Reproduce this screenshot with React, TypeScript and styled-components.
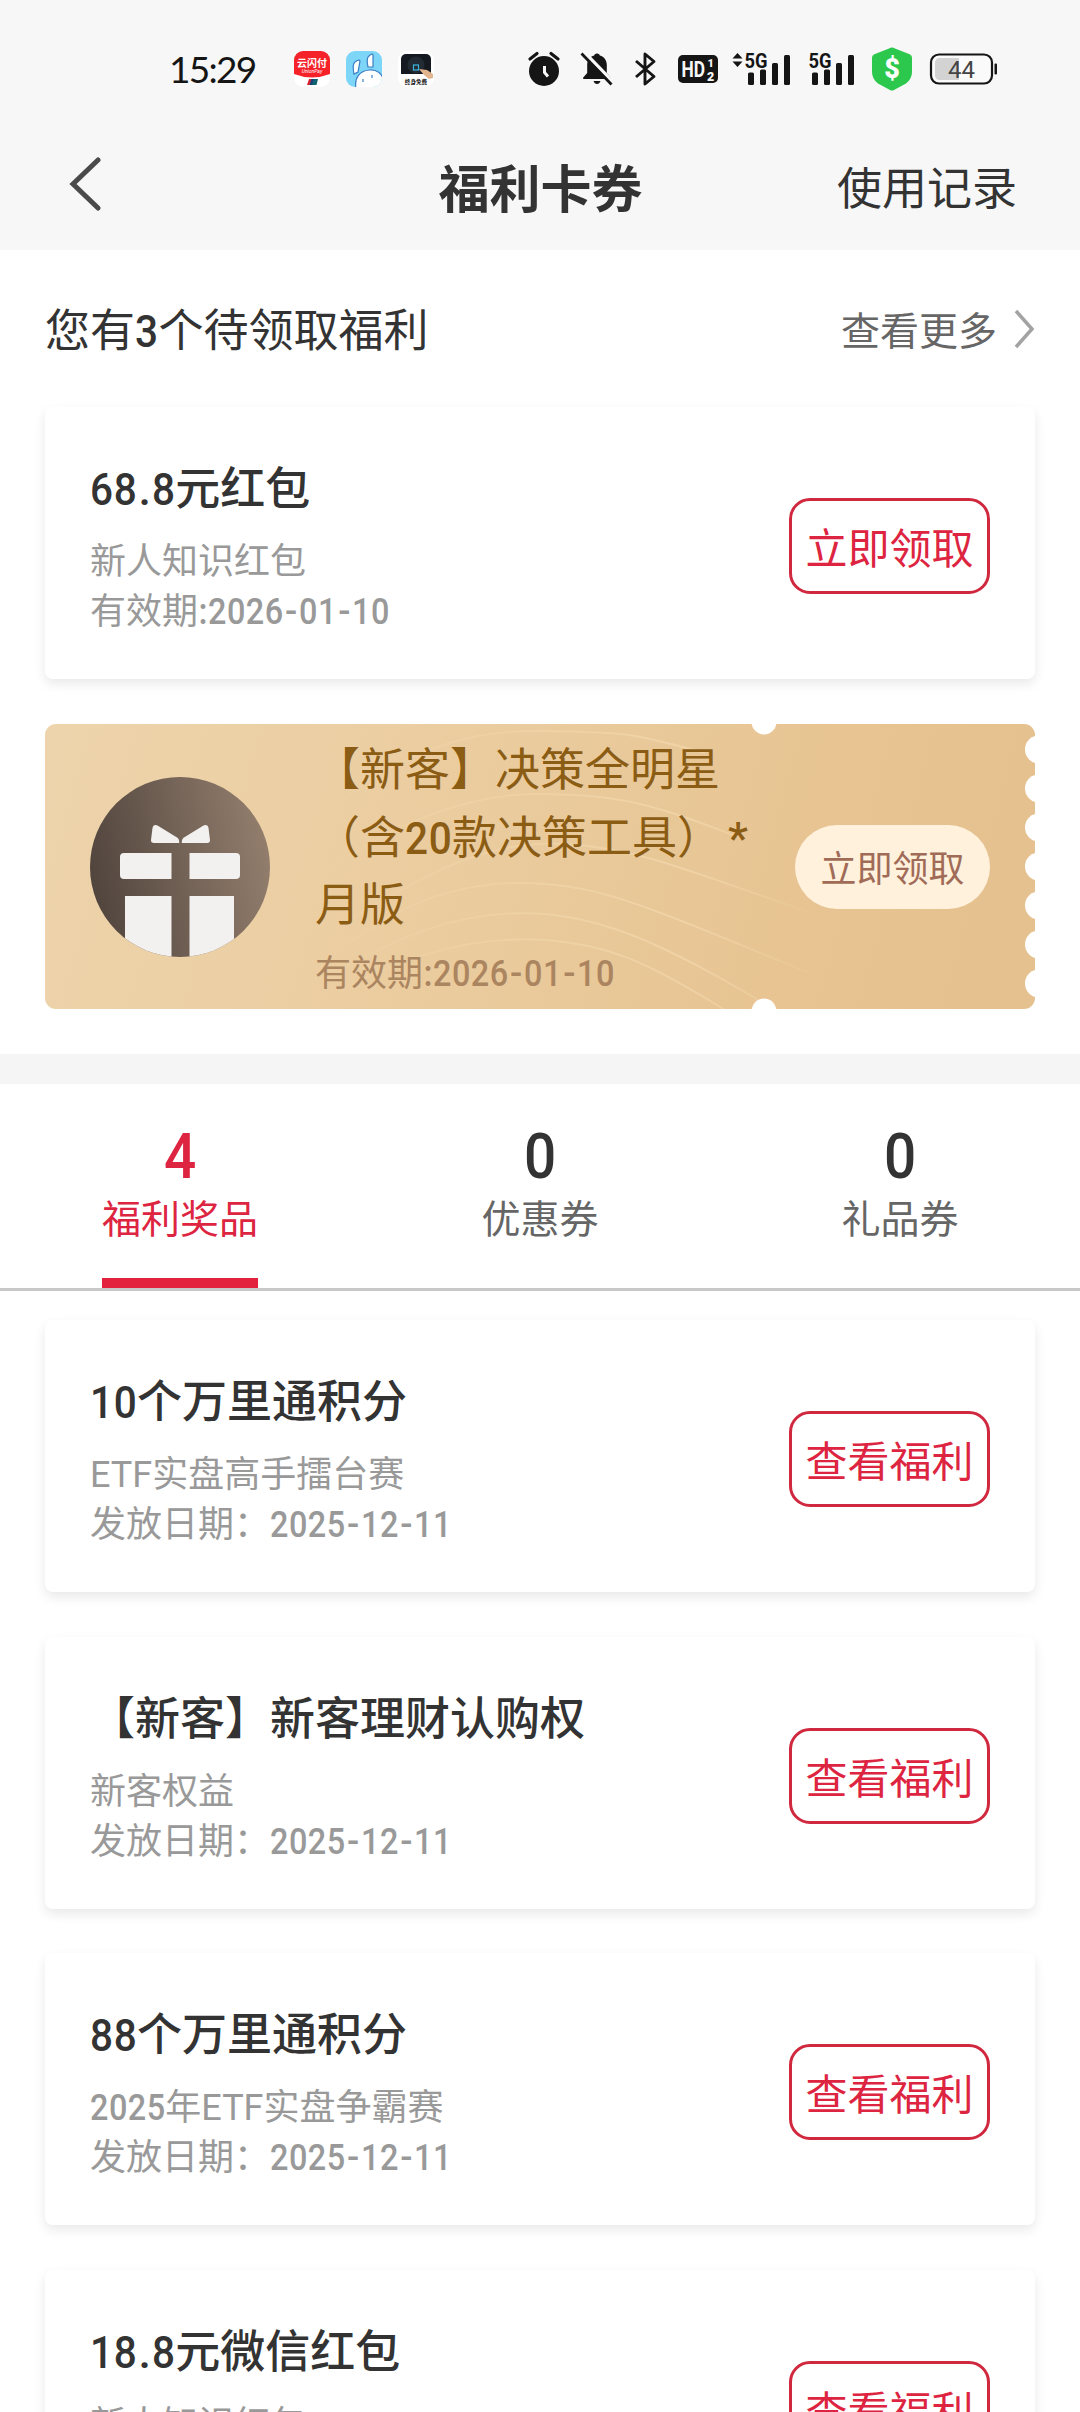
import React from "react";
import styled, { createGlobalStyle } from "styled-components";

const CJK = '"Noto Sans CJK SC", "Noto Sans", sans-serif';

const GlobalStyle = createGlobalStyle`
  * { box-sizing: border-box; }
  html, body { margin: 0; padding: 0; background: #fff; }
  body { font-family: ${CJK}; color: #333; }
`;

const Page = styled.div`
  width: 1080px;
  height: 2412px;
  overflow: hidden;
  background: #fff;
  display: flex;
  flex-direction: column;
  > * { flex-shrink: 0; }
`;

/* ---------- status bar ---------- */

const StatusBar = styled.div`
  height: 126px;
  padding: 12px 82px 0 169px;
  background: #f7f7f7;
  display: flex;
  align-items: center;
  justify-content: space-between;
`;

const StatusGroup = styled.div`
  display: flex;
  align-items: center;
`;

const Clock = styled.span`
  width: 125px;
  font-family: Lato, Roboto, sans-serif;
  font-size: 37px;
  line-height: 40px;
  letter-spacing: -1.7px;
  color: #151515;
`;

const StatusIcon = styled.svg<{ $gap: number }>`
  display: block;
  overflow: visible;
  margin-left: ${(p) => p.$gap}px;
`;

/* ---------- header ---------- */

const Header = styled.header`
  height: 124px;
  padding: 0 63px 4px 66px;
  background: #f7f7f7;
  display: grid;
  grid-template-columns: 1fr auto 1fr;
  align-items: center;
`;

const BackIcon = styled.svg`
  display: block;
  margin: 0 0 4px 2px;
`;

const Title = styled.h1`
  margin: 0 2px 0 0;
  font-size: 51px;
  line-height: 70px;
  font-weight: 700;
  color: #333;
`;

const HeaderLink = styled.span`
  justify-self: end;
  font-size: 45px;
  line-height: 64px;
`;

/* ---------- claimable section ---------- */

const Claimable = styled.section`
  height: 804px;
  padding: 0 45px;
`;

const SectionHead = styled.div`
  height: 157px;
  display: flex;
  align-items: center;
  justify-content: space-between;
`;

const SectionTitle = styled.span`
  margin-bottom: 2px;
  font-size: 45px;
  line-height: 64px;
`;

const More = styled.span`
  display: flex;
  align-items: center;
  gap: 17px;
  font-size: 39px;
  line-height: 56px;
  color: #666;
`;

const MoreLabel = styled.span`
  margin-bottom: 2px;
`;

const Card = styled.article`
  height: 272px;
  padding: 0 45px;
  border-radius: 8px;
  background: #fff;
  box-shadow: 0 5px 12px rgba(0, 0, 0, 0.09);
  display: flex;
  align-items: center;
  justify-content: space-between;
`;

const CardBody = styled.div`
  align-self: flex-start;
  padding-top: 47px;
  display: flex;
  flex-direction: column;
`;

const CardTitle = styled.h2`
  margin: 0 0 15px;
  font-size: 45px;
  line-height: 64px;
  font-weight: 500;
  white-space: nowrap;
`;

const CardLine = styled.p<{ $color?: string }>`
  margin: 0;
  font-size: 36px;
  line-height: 50px;
  color: ${(p) => p.$color ?? "#999"};
  white-space: nowrap;
`;

const OutlineButton = styled.button`
  width: 201px;
  height: 96px;
  padding: 0;
  margin-top: 6px;
  border: 3px solid #d0283f;
  border-radius: 21px;
  background: #fff;
  color: #dd2440;
  font-family: ${CJK};
  font-size: 42px;
  line-height: 60px;
  white-space: nowrap;
`;

const Ticket = styled.article`
  position: relative;
  height: 285px;
  margin-top: 45px;
  padding: 0 45px;
  display: flex;
  align-items: center;
`;

const TicketArt = styled.svg`
  position: absolute;
  inset: 0;
`;

const GiftIcon = styled.svg`
  position: relative;
  display: block;
  flex: none;
`;

const TicketBody = styled.div`
  position: relative;
  flex: 1;
  margin-left: 45px;
  padding-bottom: 5px;
`;

const TicketTitle = styled.h2`
  margin: 0 0 9px;
  font-size: 45px;
  line-height: 67.5px;
  font-weight: 400;
  color: #8b5c14;
  white-space: nowrap;
`;

const PillButton = styled.button`
  position: relative;
  width: 195px;
  height: 84px;
  padding: 0 0 2px;
  border: 0;
  border-radius: 42px;
  background: #fff1dc;
  color: #a06b57;
  font-family: ${CJK};
  font-size: 36px;
  line-height: 52px;
`;

/* ---------- tabs and list ---------- */

const Divider = styled.div`
  height: 30px;
  background: #f5f5f5;
`;

const Tabs = styled.nav`
  height: 207px;
  border-bottom: 3px solid #c8c8c8;
  display: grid;
  grid-template-columns: repeat(3, 1fr);
  justify-items: center;
`;

const Tab = styled.div<{ $active?: boolean }>`
  display: flex;
  flex-direction: column;
  align-items: center;
  padding-top: 31px;
  border-bottom: 10px solid ${(p) => (p.$active ? "#e3233d" : "transparent")};
  color: ${(p) => (p.$active ? "#dd2440" : "#666")};
`;

const TabCount = styled.span<{ $active?: boolean }>`
  height: 73px;
  font-size: 63px;
  line-height: 72px;
  color: ${(p) => (p.$active ? "#dd2440" : "#333")};
`;

const TabLabel = styled.span`
  font-size: 39px;
  line-height: 56px;
`;

const List = styled.section`
  padding: 29px 45px 0;
  display: flex;
  flex-direction: column;
  gap: 44.5px;
  > * { flex-shrink: 0; }
`;

/* ---------- mixed script text ---------- */

const Latin = styled.span`
  font-family: Roboto, sans-serif;
  line-height: 1;
`;

/* Condensed numerals: the box is as wide as the squeezed glyphs. */
const Digits = styled(Latin)<{ $em: number }>`
  display: inline-block;
  width: ${(p) => p.$em}em;
  font-weight: 500;
  letter-spacing: 0.016em;
  transform: scaleX(0.9);
  transform-origin: left center;
  white-space: nowrap;
`;

const Hyphen = styled(Latin)`
  margin: 0 0.04em 0 0.05em;
  font-weight: 500;
`;

const Point = styled(Latin)`
  margin: 0 0.02em 0 0.03em;
  font-weight: 500;
`;

const Star = styled(Latin)`
  margin-left: 0.13em;
  font-weight: 500;
`;

function Mixed({ text }: { text: string }) {
  return (
    <>
      {text.split(/([0-9]+|[A-Za-z]+|[-.*])/).map((part, i) => {
        if (part === "-") return <Hyphen key={i}>{part}</Hyphen>;
        if (part === ".") return <Point key={i}>{part}</Point>;
        if (part === "*") return <Star key={i}>{part}</Star>;
        if (/^[0-9]+$/.test(part)) return <Digits key={i} $em={part.length * 0.523}>{part}</Digits>;
        if (/^[A-Za-z]+$/.test(part)) return <Latin key={i}>{part}</Latin>;
        return part;
      })}
    </>
  );
}

/* ---------- icons ---------- */

const INK = "#151515";

function AppIcons() {
  return (
    <>
      <StatusIcon $gap={0} width="36" height="36" viewBox="0 0 36 36">
        <rect width="36" height="36" rx="9" fill="#fff" />
        <path d="M0 9a9 9 0 0 1 9-9h18a9 9 0 0 1 9 9v14q-18 7-36 0z" fill="#f5222a" />
        <text x="18" y="15.5" fontSize="10" fontWeight="700" fill="#fff" textAnchor="middle" fontFamily="Noto Sans CJK SC">云闪付</text>
        <text x="18" y="22" fontSize="5" fontStyle="italic" fill="#fff" textAnchor="middle" fontFamily="Roboto">UnionPay</text>
        <path d="M15 28h5l-2 6h-5z" fill="#d8232f" />
        <path d="M17.5 28h3l-2 6h-3z" fill="#16407a" />
        <path d="M20 28h4l-1.5 6h-4.500z" fill="#0d6470" />
      </StatusIcon>
      <StatusIcon $gap={16} width="36" height="36" viewBox="0 0 36 36">
        <clipPath id="rabbit"><rect width="36" height="36" rx="9" /></clipPath>
        <g clipPath="url(#rabbit)" stroke="#3a7fc4" strokeWidth="1.2" fill="#fff">
          <rect width="36" height="36" fill="#7dd6f8" stroke="none" />
          <path d="M10 38C8 26 14 20 23 19c8-1 13 4 14 9v10z" />
          <path d="M8 23q-2-10 1-12 4-3 5-1l-2 11z" />
          <path d="M22 16q-2-9 1-11 3-3 4-1v12z" />
          <path d="M17 28v3M26 24v3" />
        </g>
      </StatusIcon>
      <StatusIcon $gap={16} width="36" height="36" viewBox="0 0 36 36">
        <rect width="36" height="36" rx="9" fill="#fff" />
        <path d="M3 8a5 5 0 0 1 5-5h20a5 5 0 0 1 5 5v15H3z" fill="#141a20" />
        <circle cx="18" cy="14" r="8.500" fill="#222b33" />
        <rect x="15.500" y="14" width="5" height="5" fill="none" stroke="#39b5e0" strokeWidth="1.2" />
        <path d="M21 18l8 1 6 4v4l-4 1-5-4z" fill="#e3b58f" />
        <text x="18" y="33" fontSize="5.6" fontWeight="700" fill="#111" textAnchor="middle" fontFamily="Noto Sans CJK SC">终身免费</text>
      </StatusIcon>
    </>
  );
}

function Signal({ arrows }: { arrows?: boolean }) {
  return (
    <StatusIcon $gap={arrows ? 14 : 16} width={arrows ? 60 : 48} height="34" viewBox={arrows ? "-13 0 60 34" : "-1 0 48 34"}>
      {arrows && <path d="M-12.500 6.500l5-5.500 5 5.500zM-12.500 9.500l5 5.500 5-5.500z" fill={INK} />}
      <text x="-.5" y="15.500" fontSize="20.500" fontWeight="700" fill={INK} fontFamily="Roboto" textLength="23" lengthAdjust="spacingAndGlyphs">5G</text>
      <g fill={INK}>
        <rect x="3" y="20.500" width="6" height="12.500" rx="1.500" />
        <rect x="15" y="17.500" width="6" height="15.500" rx="1.500" />
        <rect x="27" y="11" width="6" height="22" rx="1.500" />
        <rect x="39" y="3" width="6" height="30" rx="1.500" />
      </g>
    </StatusIcon>
  );
}

function SystemIcons() {
  return (
    <>
      <StatusIcon $gap={0} width="32" height="34" viewBox="0 0 32 34">
        <circle cx="16" cy="19" r="15" fill={INK} />
        <path d="M2 7l7-5.500M30 7l-7-5.500" stroke={INK} strokeWidth="3.200" strokeLinecap="round" />
        <path d="M16.500 14v6.500l3.500 4" stroke="#f7f7f7" strokeWidth="3" fill="none" />
      </StatusIcon>
      <StatusIcon $gap={20} width="34" height="34" viewBox="0 0 34 34">
        <path d="M17 1.500c2 0 2.500 1 2.800 2 4.500 1.300 7 4.700 7 9.500v8l4 4.500V27H3.200v-1.500l4-4.500v-8c0-4.800 2.500-8.200 7-9.500.3-1 .8-2 2.800-2z" fill={INK} />
        <path d="M13.500 29h7q-1 3-3.500 3t-3.500-3z" fill={INK} />
        <path d="M4 0l30 31" stroke="#f7f7f7" strokeWidth="3.500" />
        <path d="M1.500 1.500l30 31" stroke={INK} strokeWidth="2.800" />
      </StatusIcon>
      <StatusIcon $gap={20} width="24" height="34" viewBox="0 0 24 34">
        <path d="M2 9l18 15.500-9 7.500V2l9 7.500L2 25" fill="none" stroke={INK} strokeWidth="2.900" strokeLinejoin="round" />
      </StatusIcon>
      <StatusIcon $gap={20} width="40" height="28" viewBox="0 0 40 28">
        <rect width="40" height="28" rx="5" fill={INK} />
        <text x="3.500" y="22" fontSize="22.500" fontWeight="700" fill="#f7f7f7" fontFamily="Roboto" textLength="23.500" lengthAdjust="spacingAndGlyphs">HD</text>
        <text x="29.500" y="12" fontSize="11" fontWeight="900" fill="#f7f7f7" fontFamily="Roboto">1</text>
        <text x="29" y="25.500" fontSize="12.500" fontWeight="900" fill="#f7f7f7" fontFamily="Roboto">2</text>
      </StatusIcon>
      <Signal arrows />
      <Signal />
      <StatusIcon $gap={16} width="40" height="44" viewBox="0 0 40 44">
        <path d="M20 .5q1.500 0 3 1L37 7q3 1 3 4v14q0 7-6 11.500L22 43q-2 1-4 0L6 36.500Q0 32 0 25V11q0-3 3-4l14-5.500q1.500-1 3-1z" fill="#2cc84d" />
        <text x="20" y="31" fontSize="27" fontWeight="900" fill="#fff" textAnchor="middle" fontFamily="Roboto">$</text>
      </StatusIcon>
      <StatusIcon $gap={18} width="68" height="32" viewBox="0 0 68 32">
        <rect x="1" y="1.500" width="61" height="29" rx="8" fill="#fff" fillOpacity=".4" stroke={INK} strokeWidth="2.200" />
        <path d="M10 5h19v22H10q-5 0-5-5V10q0-5 5-5z" fill="#d3d3d3" />
        <text x="31.500" y="24.500" fontSize="24" fill="#444" textAnchor="middle" fontFamily="Roboto">44</text>
        <rect x="64.500" y="10.500" width="2.500" height="11" rx="1" fill={INK} />
      </StatusIcon>
    </>
  );
}

const NOTCHES = [0, 1, 2, 3, 4, 5, 6].map((i) => 25.5 + i * 39);

function TicketBackground() {
  return (
    <TicketArt width="990" height="285" viewBox="0 0 990 285">
      <defs>
        <linearGradient id="gold" x1="0" y1="0" x2="1" y2="0.08">
          <stop offset="0" stopColor="#eed4ac" />
          <stop offset="0.5" stopColor="#eacb9d" />
          <stop offset="0.8" stopColor="#e7c492" />
          <stop offset="1" stopColor="#e6c190" />
        </linearGradient>
        <linearGradient id="wave" gradientUnits="userSpaceOnUse" x1="240" y1="0" x2="780" y2="0">
          <stop offset="0" stopColor="#f5dcb2" stopOpacity="0" />
          <stop offset="0.45" stopColor="#f3daae" stopOpacity=".45" />
          <stop offset="0.75" stopColor="#f5dcb2" stopOpacity=".6" />
          <stop offset="1" stopColor="#f5dcb2" stopOpacity="0" />
        </linearGradient>
        <clipPath id="ticketShape"><rect width="990" height="285" rx="11" /></clipPath>
      </defs>
      <g clipPath="url(#ticketShape)">
        <rect width="990" height="285" fill="url(#gold)" />
        <g fill="none" stroke="url(#wave)" strokeWidth="1.800">
          <path d="M240 130C330 30 420 5 500 7s80 0 160 22" />
          <path d="M260 165C350 90 440 68 500 70s90 2 190 42" />
          <path d="M280 210C380 150 440 115 520 120s130 30 250 70" />
          <path d="M290 230C370 165 440 155 500 160s100 20 290 100" />
          <path d="M290 250C370 200 440 185 500 190s120 30 220 90" />
          <path d="M290 270C370 225 440 212 500 216s100 20 180 70" />
        </g>
        <g fill="#fff">
          <circle cx="719" cy="-2" r="12.500" />
          <circle cx="719" cy="287" r="12.500" />
          {NOTCHES.map((y) => <circle key={y} cx="994" cy={y} r="14" />)}
        </g>
      </g>
    </TicketArt>
  );
}

function Gift() {
  return (
    <GiftIcon width="180" height="180" viewBox="0 0 180 180">
      <defs>
        <linearGradient id="brown" x1="0" y1="0.6" x2="1" y2="0.4">
          <stop offset="0" stopColor="#50443d" />
          <stop offset="1" stopColor="#937e6d" />
        </linearGradient>
        <clipPath id="disc"><circle cx="90" cy="90" r="90" /></clipPath>
      </defs>
      <g clipPath="url(#disc)">
        <rect width="180" height="180" fill="url(#brown)" />
        <g fill="#f2f1f0">
          <path d="M61 63l1.500-12q.8-4 5-2.500L87 60.500q2.500 1.800 2.200 5.500H64q-3.200 0-3-3z" />
          <path d="M120 63l-1.500-12q-.8-4-5-2.500L94 60.500q-2.500 1.800-2.200 5.500H117q3.200 0 3-3z" />
          <path d="M34 76h47.500v26H34q-4 0-4-4V80q0-4 4-4z" />
          <path d="M99.500 76H146q4 0 4 4v18q0 4-4 4H99.500z" />
          <path d="M35 119h46.500v61H35zM99.500 119H144v61H99.500z" />
        </g>
      </g>
    </GiftIcon>
  );
}

/* ---------- data ---------- */

const TABS = [
  { count: 4, label: "福利奖品", active: true },
  { count: 0, label: "优惠券" },
  { count: 0, label: "礼品券" },
];

const PRIZES = [
  { title: "10个万里通积分", source: "ETF实盘高手擂台赛" },
  { title: "【新客】新客理财认购权", source: "新客权益" },
  { title: "88个万里通积分", source: "2025年ETF实盘争霸赛" },
  { title: "18.8元微信红包", source: "新人知识红包" },
];

function BenefitCard(props: { title: string; source: string; date: string; action: string }) {
  return (
    <Card>
      <CardBody>
        <CardTitle><Mixed text={props.title} /></CardTitle>
        <CardLine><Mixed text={props.source} /></CardLine>
        <CardLine><Mixed text={props.date} /></CardLine>
      </CardBody>
      <OutlineButton>{props.action}</OutlineButton>
    </Card>
  );
}

export default function App() {
  return (
    <Page>
      <GlobalStyle />
      <StatusBar>
        <StatusGroup>
          <Clock>15:29</Clock>
          <AppIcons />
        </StatusGroup>
        <StatusGroup>
          <SystemIcons />
        </StatusGroup>
      </StatusBar>
      <Header>
        <BackIcon width="34" height="54" viewBox="0 0 34 54">
          <path d="M30 3L5 27l25 24" fill="none" stroke="#4a4a4a" strokeWidth="5" strokeLinecap="round" />
        </BackIcon>
        <Title>福利卡券</Title>
        <HeaderLink>使用记录</HeaderLink>
      </Header>
      <Claimable>
        <SectionHead>
          <SectionTitle><Mixed text="您有3个待领取福利" /></SectionTitle>
          <More>
            <MoreLabel>查看更多</MoreLabel>
            <svg width="21" height="40" viewBox="0 0 21 40">
              <path d="M2 2l16 18L2 38" fill="none" stroke="#a3a3a3" strokeWidth="3.500" />
            </svg>
          </More>
        </SectionHead>
        <BenefitCard title="68.8元红包" source="新人知识红包" date="有效期:2026-01-10" action="立即领取" />
        <Ticket>
          <TicketBackground />
          <Gift />
          <TicketBody>
            <TicketTitle>
              【新客】决策全明星<br />
              <Mixed text="（含20款决策工具）*" /><br />
              月版
            </TicketTitle>
            <CardLine $color="#ab8560"><Mixed text="有效期:2026-01-10" /></CardLine>
          </TicketBody>
          <PillButton>立即领取</PillButton>
        </Ticket>
      </Claimable>
      <Divider />
      <Tabs>
        {TABS.map((tab) => (
          <Tab key={tab.label} $active={tab.active}>
            <TabCount $active={tab.active}><Mixed text={String(tab.count)} /></TabCount>
            <TabLabel>{tab.label}</TabLabel>
          </Tab>
        ))}
      </Tabs>
      <List>
        {PRIZES.map((prize) => (
          <BenefitCard key={prize.title} {...prize} date="发放日期：2025-12-11" action="查看福利" />
        ))}
      </List>
    </Page>
  );
}
